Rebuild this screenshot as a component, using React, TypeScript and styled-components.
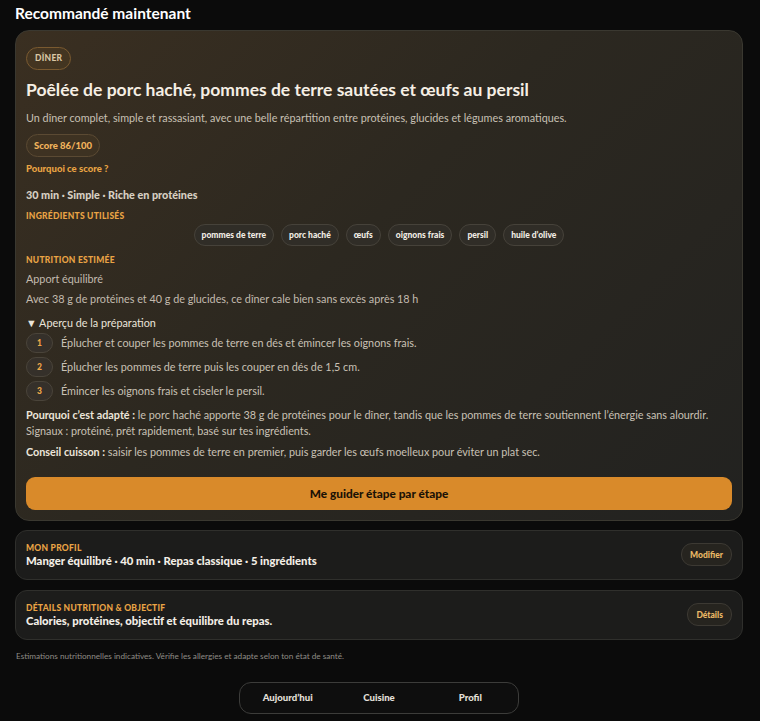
import React from 'react';
import styled, { createGlobalStyle } from 'styled-components';

const GlobalStyle = createGlobalStyle`
  body {
    margin: 0;
    background: #0b0b0b;
    font-family: Lato, "Noto Sans", sans-serif;
    color: #ece6dc;
  }
`;

const Page = styled.div`
  width: 728px;
  padding: 4px 0 8px 15px;
`;

const Heading = styled.h2`
  margin: 0 0 8px;
  font-size: 15.5px;
  font-weight: 700;
  color: #ffffff;
  line-height: 18px;
`;

const HeroCard = styled.section`
  border: 1px solid #3a3830;
  border-radius: 14px;
  background: linear-gradient(135deg, #3a2f21 0%, #2c2820 45%, #222220 100%);
  padding: 14px 10px 10px 10px;
`;

const Pill = styled.span<{ $tone?: 'muted' | 'accent' }>`
  display: inline-flex;
  align-items: center;
  height: 23px;
  box-sizing: border-box;
  padding: 0 ${p => (p.$tone === 'accent' ? '7px' : '8px')};
  border-radius: 12px;
  font-size: ${p => (p.$tone === 'accent' ? '9.5px' : '8.5px')};
  font-weight: 900;
  letter-spacing: ${p => (p.$tone === 'accent' ? '0' : '0.03em')};
  color: ${p => (p.$tone === 'accent' ? '#f2b45c' : '#d9c7a4')};
  background: ${p => (p.$tone === 'accent' ? 'rgba(70, 56, 36, 0.5)' : 'rgba(90, 66, 34, 0.35)')};
  border: 1px solid ${p => (p.$tone === 'accent' ? '#5b4a33' : '#7a5a30')};
`;

const Title = styled.h1`
  margin: 8px 0 0;
  font-size: 17.5px;
  font-weight: 700;
  color: #f6efe4;
  line-height: 24px;
`;

const Lead = styled.p`
  margin: 8px 0 0;
  font-size: 10.8px;
  color: #c8c0b4;
  line-height: 16px;
`;

const ScoreBlock = styled.div`
  margin-top: 8px;
  display: flex;
  flex-direction: column;
  align-items: flex-start;
`;

const Link = styled.span`
  margin-top: 5px;
  font-size: 9.5px;
  font-weight: 900;
  color: #e9a443;
  line-height: 14px;
`;

const Meta = styled.div`
  margin-top: 12px;
  font-size: 10.8px;
  font-weight: 900;
  color: #d8d0c3;
  line-height: 14px;
`;

const Label = styled.div<{ $gap?: number }>`
  margin-top: ${p => p.$gap ?? 8}px;
  font-size: 8.5px;
  font-weight: 900;
  letter-spacing: 0.03em;
  text-transform: uppercase;
  color: #eaa445;
  line-height: 12px;
`;

const ChipRow = styled.div`
  margin-top: 2px;
  display: flex;
  justify-content: center;
  gap: 7px;
`;

const Chip = styled.span`
  display: inline-flex;
  align-items: center;
  height: 20px;
  padding: 0 7px;
  border-radius: 11px;
  background: #302d27;
  border: 1px solid #46423a;
  font-size: 8.5px;
  font-weight: 900;
  color: #f1ece4;
`;

const Text = styled.p<{ $gap?: number }>`
  margin: ${p => p.$gap ?? 2}px 0 0;
  font-size: 10.8px;
  color: #c3bbaf;
  line-height: 18px;
`;

const Summary = styled.div`
  margin-top: 6px;
  font-size: 10.8px;
  color: #ebe5db;
  line-height: 18px;
  display: flex;
  align-items: center;
  gap: 4px;
`;

const Steps = styled.ol`
  list-style: none;
  margin: 1px 0 0;
  padding: 0;
  display: flex;
  flex-direction: column;
  gap: 4px;
`;

const Step = styled.li`
  display: flex;
  align-items: center;
  gap: 8px;
  font-size: 10.8px;
  color: #c9c1b5;
  line-height: 20px;
`;

const StepNum = styled.span`
  width: 27px;
  height: 20px;
  border-radius: 10px;
  display: inline-flex;
  align-items: center;
  justify-content: center;
  background: #35302a;
  border: 1px solid #4a443a;
  box-sizing: border-box;
  font-size: 8.5px;
  font-weight: 900;
  color: #f0a848;
`;

const Para = styled.p<{ $gap?: number }>`
  margin: ${p => p.$gap ?? 6}px 0 0;
  font-size: 10.8px;
  color: #c9c1b5;
  line-height: 16px;

  b {
    color: #ece5da;
    font-weight: 700;
  }
`;

const GuideButton = styled.button`
  margin-top: 17px;
  width: 100%;
  height: 33px;
  border: none;
  border-radius: 9px;
  background: #d98a2a;
  font-family: inherit;
  font-size: 11.8px;
  font-weight: 900;
  color: #1b1206;
`;

const InfoCard = styled.section`
  margin-top: 9px;
  height: 50px;
  box-sizing: border-box;
  border: 1px solid #2f2f2c;
  border-radius: 12px;
  background: #1c1c1b;
  padding: 0 10px;
  display: flex;
  align-items: center;
  justify-content: space-between;

  & + & {
    margin-top: 10px;
  }
`;

const InfoText = styled.div`
  display: flex;
  flex-direction: column;
`;

const InfoValue = styled.div`
  font-size: 11.3px;
  font-weight: 900;
  color: #f3eee6;
  line-height: 14px;
`;

const SmallButton = styled.span`
  display: inline-flex;
  align-items: center;
  height: 21px;
  padding: 0 8px;
  border-radius: 11px;
  background: #26241f;
  border: 1px solid #3c3933;
  font-size: 8.5px;
  font-weight: 900;
  color: #eab866;
`;

const Disclaimer = styled.p`
  margin: 10px 0 0 1px;
  font-size: 8.2px;
  color: #8f8c86;
  line-height: 12px;
`;

const BottomNav = styled.nav`
  margin: 20px 0 0 224px;
  width: 280px;
  height: 32px;
  box-sizing: border-box;
  border: 1px solid #3c3c3a;
  border-radius: 12px;
  background: #0e0e0e;
  display: grid;
  grid-template-columns: 1fr 1fr 1fr;
  align-items: center;
  padding: 0 2px;
`;

const NavItem = styled.span`
  text-align: center;
  font-size: 9.6px;
  font-weight: 900;
  color: #e4e0da;
`;

const ingredients = ['pommes de terre', 'porc haché', 'œufs', 'oignons frais', 'persil', 'huile d’olive'];

const steps = [
  'Éplucher et couper les pommes de terre en dés et émincer les oignons frais.',
  'Éplucher les pommes de terre puis les couper en dés de 1,5 cm.',
  'Émincer les oignons frais et ciseler le persil.',
];

export default function App() {
  return (
    <Page>
      <GlobalStyle />
      <Heading>Recommandé maintenant</Heading>

      <HeroCard>
        <Pill>DÎNER</Pill>
        <Title>Poêlée de porc haché, pommes de terre sautées et œufs au persil</Title>
        <Lead>
          Un dîner complet, simple et rassasiant, avec une belle répartition entre protéines, glucides et légumes
          aromatiques.
        </Lead>
        <ScoreBlock>
          <Pill $tone="accent">Score 86/100</Pill>
          <Link>Pourquoi ce score ?</Link>
        </ScoreBlock>
        <Meta>30 min · Simple · Riche en protéines</Meta>

        <Label>Ingrédients utilisés</Label>
        <ChipRow>
          {ingredients.map(i => (
            <Chip key={i}>{i}</Chip>
          ))}
        </ChipRow>

        <Label $gap={8}>Nutrition estimée</Label>
        <Text $gap={4}>Apport équilibré</Text>
        <Text>Avec 38 g de protéines et 40 g de glucides, ce dîner cale bien sans excès après 18 h</Text>

        <Summary>▼ Aperçu de la préparation</Summary>
        <Steps>
          {steps.map((s, n) => (
            <Step key={n}>
              <StepNum>{n + 1}</StepNum>
              {s}
            </Step>
          ))}
        </Steps>

        <Para>
          <b>Pourquoi c’est adapté :</b> le porc haché apporte 38 g de protéines pour le dîner, tandis que les
          pommes de terre soutiennent l’énergie sans alourdir.
          <br />
          Signaux : protéiné, prêt rapidement, basé sur tes ingrédients.
        </Para>
        <Para $gap={5}>
          <b>Conseil cuisson :</b> saisir les pommes de terre en premier, puis garder les œufs moelleux pour éviter
          un plat sec.
        </Para>

        <GuideButton>Me guider étape par étape</GuideButton>
      </HeroCard>

      <InfoCard>
        <InfoText>
          <Label $gap={0}>Mon profil</Label>
          <InfoValue>Manger équilibré · 40 min · Repas classique · 5 ingrédients</InfoValue>
        </InfoText>
        <SmallButton>Modifier</SmallButton>
      </InfoCard>

      <InfoCard>
        <InfoText>
          <Label $gap={0}>Détails nutrition &amp; objectif</Label>
          <InfoValue>Calories, protéines, objectif et équilibre du repas.</InfoValue>
        </InfoText>
        <SmallButton>Détails</SmallButton>
      </InfoCard>

      <Disclaimer>
        Estimations nutritionnelles indicatives. Vérifie les allergies et adapte selon ton état de santé.
      </Disclaimer>

      <BottomNav>
        <NavItem>Aujourd’hui</NavItem>
        <NavItem>Cuisine</NavItem>
        <NavItem>Profil</NavItem>
      </BottomNav>
    </Page>
  );
}
